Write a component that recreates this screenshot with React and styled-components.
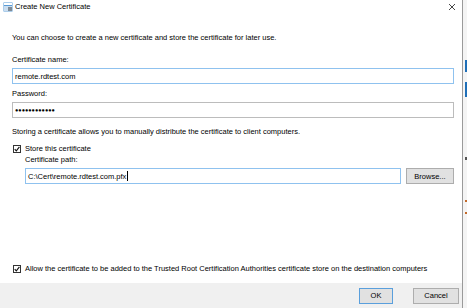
import styled, { createGlobalStyle } from 'styled-components';

const GlobalStyle = createGlobalStyle`
    html, body {
        margin: 0;
        padding: 0;
        background: #ffffff;
    }
    body {
        font-family: "Liberation Sans", Arial, sans-serif;
        font-size: 7.5px;
        color: #000000;
    }
`

const CertIcon = () => (
    <svg width="10" height="10" viewBox="0 0 10 10">
        <rect x="0.5" y="0.5" width="9" height="9" fill="#5a9bd5" />
        <rect x="1" y="1" width="8" height="2" fill="#ffffff" />
        <rect x="1" y="4" width="8" height="5" fill="#c9ddf0" />
        <rect x="5" y="5" width="4" height="4" fill="#7f8b96" />
    </svg>
)

const CloseIcon = () => (
    <svg width="8" height="8" viewBox="0 0 8 8">
        <path d="M1 1 L7 7 M7 1 L1 7" stroke="#333" strokeWidth="0.9" />
    </svg>
)

const Check = ({checked}) => (
    <CheckBox>
        {checked && (
            <svg width="6" height="6" viewBox="0 0 6 6">
                <path d="M0.7 3.2 L2.3 4.9 L5.4 0.9" stroke="#111" strokeWidth="1.1" fill="none" />
            </svg>
        )}
    </CheckBox>
)

const App = () => {
    return (
        <>
            <GlobalStyle />
            <Screen>
                <Dialog>
                    <TitleBar>
                        <TitleLeft>
                            <CertIcon />
                            <TitleText>Create New Certificate</TitleText>
                        </TitleLeft>
                        <CloseBox><CloseIcon /></CloseBox>
                    </TitleBar>
                    <Body>
                        <Intro>You can choose to create a new certificate and store the certificate for later use.</Intro>
                        <Label>Certificate name:</Label>
                        <TextBox focused>remote.rdtest.com</TextBox>
                        <Label gap={5}>Password:</Label>
                        <TextBox password>●●●●●●●●●●●●</TextBox>
                        <Note>Storing a certificate allows you to manually distribute the certificate to client computers.</Note>
                        <CheckRow>
                            <Check checked />
                            <span>Store this certificate</span>
                        </CheckRow>
                        <Indent>
                            <Label gap={1}>Certificate path:</Label>
                            <PathRow>
                                <TextBox focused grow>C:\Cert\remote.rdtest.com.pfx<Caret /></TextBox>
                                <Button width={48}>Browse...</Button>
                            </PathRow>
                        </Indent>
                    </Body>
                    <Spacer />
                    <AllowRow>
                        <Check checked />
                        <span>Allow the certificate to be added to the Trusted Root Certification Authorities certificate store on the destination computers</span>
                    </AllowRow>
                    <Footer>
                        <Button width={34} isDefault>OK</Button>
                        <Button width={46}>Cancel</Button>
                    </Footer>
                </Dialog>
                <BackStrip>
                    <Mark color="#1f6fb8" h={12} top={60} />
                    <Mark color="#1f6fb8" h={15} top={10} />
                    <Mark color="#555" h={3} top={60} />
                    <Mark color="#c46a2a" h={2} top={40} />
                    <Mark color="#c46a2a" h={2} top={10} />
                </BackStrip>
            </Screen>
        </>
    )
}

export default App

const Screen = styled.div`
    width: 467px;
    height: 308px;
    display: flex;
    overflow: hidden;
`
const Dialog = styled.div`
    width: 462px;
    height: 308px;
    display: flex;
    flex-direction: column;
    background: #ffffff;
    border-right: 1px solid #9a9a9a;
`
const TitleBar = styled.div`
    height: 13px;
    display: flex;
    align-items: center;
    justify-content: space-between;
    padding: 0 2px 0 3px;
`
const TitleLeft = styled.div`
    display: flex;
    align-items: center;
    gap: 2px;
`
const TitleText = styled.span`
    font-size: 7.5px;
`
const CloseBox = styled.div`
    width: 12px;
    display: flex;
    justify-content: center;
    margin-right: 2px;
`
const Body = styled.div`
    display: flex;
    flex-direction: column;
    padding: 0 8px 0 12px;
`
const Intro = styled.div`
    line-height: 10px;
    margin-top: 20px;
`
const Label = styled.div`
    line-height: 10px;
    margin-top: ${p => p.gap ?? 12}px;
    margin-bottom: 3px;
`
const TextBox = styled.div`
    height: 14px;
    box-sizing: content-box;
    display: flex;
    align-items: center;
    padding: 0 2px;
    border: 1px solid ${p => p.focused ? '#8fc2ef' : '#bcbcbc'};
    font-size: ${p => p.password ? '5.5px' : '7.5px'};
    letter-spacing: 0;
    flex: ${p => p.grow ? 1 : 'none'};
    white-space: nowrap;
`
const Caret = styled.span`
    width: 1px;
    height: 10px;
    background: #000;
    margin-left: 1px;
`
const Note = styled.div`
    line-height: 10px;
    margin-top: 9px;
`
const CheckRow = styled.div`
    display: flex;
    align-items: center;
    gap: 4px;
    margin-top: 7px;
    padding-left: 1px;
    line-height: 10px;
`
const CheckBox = styled.div`
    width: 6px;
    height: 6px;
    border: 1px solid #333;
    background: #fff;
    display: flex;
    align-items: center;
    justify-content: center;
`
const Indent = styled.div`
    display: flex;
    flex-direction: column;
    padding-left: 13px;
`
const PathRow = styled.div`
    display: flex;
    align-items: center;
    gap: 5px;
`
const Button = styled.div`
    width: ${p => p.width}px;
    height: 16px;
    box-sizing: border-box;
    display: flex;
    align-items: center;
    justify-content: center;
    background: #e1e1e1;
    border: 1px solid ${p => p.isDefault ? '#5a9fdc' : '#adadad'};
    font-size: 7.5px;
`
const Spacer = styled.div`
    flex: 1;
`
const AllowRow = styled.div`
    display: flex;
    align-items: center;
    gap: 4px;
    padding-left: 13px;
    line-height: 10px;
    margin-bottom: 9px;
`
const Footer = styled.div`
    height: 25px;
    background: #f0f0f0;
    display: flex;
    align-items: center;
    justify-content: flex-end;
    gap: 20px;
    padding-right: 3px;
`
const BackStrip = styled.div`
    flex: 1;
    background: #f4f4f4;
    display: flex;
    flex-direction: column;
    align-items: flex-end;
`
const Mark = styled.div`
    width: 2px;
    height: ${p => p.h}px;
    background: ${p => p.color};
    margin-top: ${p => p.top}px;
`
